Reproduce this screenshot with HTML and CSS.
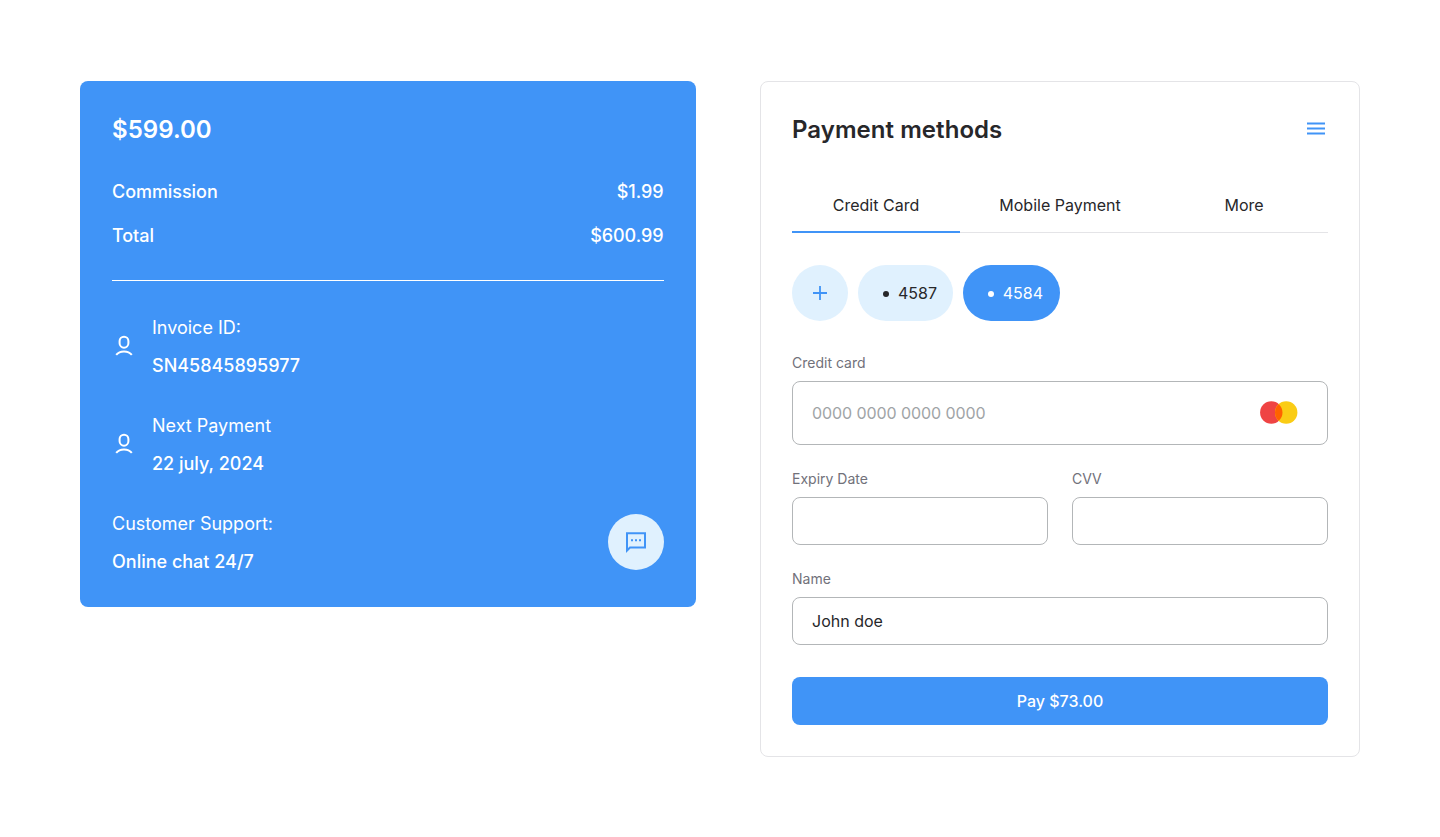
FILE: index.html
```html
<!DOCTYPE html>
<html lang="en">
<head>
<meta charset="utf-8">
<title>Payment</title>
<link rel="stylesheet" href="styles.css">
</head>
<body>
<main class="page">
  <section class="summary">
    <h1 class="title">$599.00</h1>
    <div class="rows">
      <div class="row"><span>Commission</span><span>$1.99</span></div>
      <div class="row"><span>Total</span><span>$600.99</span></div>
    </div>
    <div class="divider"></div>
    <div class="details">
      <div class="detail">
        <svg class="person" width="24" height="24" viewBox="0 0 24 24" fill="none" stroke="currentColor" stroke-width="2"><rect x="7.6" y="2.7" width="8.8" height="11" rx="4.4"/><path d="M4.200 20.900C6 18.600 9 17.500 12 17.500s6 1.100 7.800 3.400"/></svg>
        <div class="pair"><span class="caption">Invoice ID:</span><span class="value">SN45845895977</span></div>
      </div>
      <div class="detail">
        <svg class="person" width="24" height="24" viewBox="0 0 24 24" fill="none" stroke="currentColor" stroke-width="2"><rect x="7.6" y="2.7" width="8.8" height="11" rx="4.4"/><path d="M4.200 20.900C6 18.600 9 17.500 12 17.500s6 1.100 7.800 3.400"/></svg>
        <div class="pair"><span class="caption">Next Payment</span><span class="value">22 july, 2024</span></div>
      </div>
      <div class="detail support">
        <div class="pair"><span class="caption">Customer Support:</span><span class="value">Online chat 24/7</span></div>
        <button class="chat" aria-label="Open chat">
          <svg width="24" height="24" viewBox="0 0 24 24" fill="none" stroke="currentColor" stroke-width="2"><path d="M3 20.500V3.300h18v14.200H6z"/><path d="M7 10.300h2M11 10.300h2M15 10.300h2"/></svg>
        </button>
      </div>
    </div>
  </section>

  <section class="methods">
    <header class="methods-head">
      <h2 class="title">Payment methods</h2>
      <svg class="menu" width="24" height="24" viewBox="0 0 24 24" fill="none" stroke="currentColor" stroke-width="2"><path d="M3 6.600h18M3 11.600h18M3 16.600h18"/></svg>
    </header>
    <nav class="tabs">
      <span class="tab active">Credit Card</span>
      <span class="tab">Mobile Payment</span>
      <span class="tab">More</span>
    </nav>
    <div class="chips">
      <button class="chip add" aria-label="Add card"><svg width="24" height="24" viewBox="0 0 24 24" fill="none" stroke="currentColor" stroke-width="1.8"><path d="M12 5v14M5 12h14"/></svg></button>
      <button class="chip card-a"><i class="dot"></i>4587</button>
      <button class="chip card-b"><i class="dot"></i>4584</button>
    </div>
    <div class="form">
      <label class="field"><span class="label">Credit card</span>
        <span class="box tall"><input class="input number" placeholder="0000 0000 0000 0000">
          <svg class="brand" width="38" height="24" viewBox="0 0 38 24"><circle cx="11.300" cy="11.500" r="11.200" fill="#ef4444"/><circle cx="26.200" cy="11.500" r="11.200" fill="#facc15"/><path d="M18.750 3.140a11.200 11.200 0 0 1 0 16.720a11.200 11.200 0 0 1 0-16.720z" fill="#ff6200"/></svg>
        </span>
      </label>
      <div class="split">
        <label class="field"><span class="label">Expiry Date</span><span class="box"><input class="input"></span></label>
        <label class="field"><span class="label">CVV</span><span class="box"><input class="input"></span></label>
      </div>
      <label class="field"><span class="label">Name</span><span class="box"><input class="input" value="John doe"></span></label>
    </div>
    <button class="pay">Pay $73.00</button>
  </section>
</main>
</body>
</html>
```
FILE: styles.css
```css
* { box-sizing: border-box; }
body { margin: 0; background: #fff; color: #27272a; font-family: Inter, "Liberation Sans", sans-serif; }
button, input { font: inherit; color: inherit; border: 0; padding: 0; background: none; letter-spacing: inherit; }
.page { display: flex; align-items: flex-start; gap: 64px; width: 1440px; padding: 80.5px 80px; }
.title { margin: 0 0 -2px; font-size: 24px; line-height: 34px; font-weight: 600; letter-spacing: 0.05px; }

.summary { width: 616px; height: 526px; padding: 32px; border-radius: 8px; background: #4094f7; color: #fff; font-size: 18px; line-height: 28px; }
.rows { display: flex; flex-direction: column; gap: 16px; margin: 33px 0 -1px; font-weight: 500; }
.row { display: flex; justify-content: space-between; padding-right: 0.5px; letter-spacing: -0.05px; }
.divider { height: 1px; margin: 31px 0 32px; background: #fff; }
.details { display: flex; flex-direction: column; gap: 32px; }
.detail { display: flex; align-items: center; gap: 16px; }
.support { justify-content: space-between; }
.pair { display: flex; flex-direction: column; gap: 10px; padding-top: 1px; margin-bottom: -1px; }
.value { font-weight: 500; }
.chat { display: grid; place-items: center; width: 56px; height: 56px; border-radius: 50%; background: #e0f1fe; color: #4094f7; }

.methods { width: 600px; height: 676px; padding: 31px; border: 1px solid #e4e4e7; border-radius: 8px; font-size: 16px; line-height: 24px; }
.methods-head { display: flex; justify-content: space-between; align-items: center; height: 32px; }
.menu { color: #4094f7; }
.tabs { display: grid; grid-template-columns: repeat(3, 168px); gap: 16px; height: 56px; margin-top: 32px; box-shadow: inset 0 -1px #e4e4e7; }
.tab { padding-top: 16px; text-align: center; }
.tab.active { border-bottom: 2px solid #4094f7; }
.chips { display: flex; gap: 10px; margin-top: 32px; }
.chip { display: flex; align-items: center; justify-content: flex-end; gap: 9px; height: 56px; padding-right: 16px; border-radius: 28px; background: #e0f1fe; }
.add { width: 56px; color: #4094f7; }
.card-a { width: 95px; }
.card-b { width: 97px; padding-right: 17px; background: #4094f7; color: #fff; }
.dot { width: 6px; height: 6px; margin-top: 2px; border-radius: 50%; background: currentColor; }
.form { display: flex; flex-direction: column; gap: 24px; margin-top: 32px; }
.split { display: grid; grid-template-columns: repeat(2, minmax(0, 1fr)); gap: 24px; }
.field { display: flex; flex-direction: column; gap: 8px; }
.label { font-size: 14px; line-height: 20px; color: #71717a; }
.box { display: flex; align-items: center; height: 48px; padding: 0 19px; border: 1px solid #b3b6b8; border-radius: 8px; }
.box.tall { height: 64px; padding-right: 29px; }
.input { flex: 1; min-width: 0; height: 24px; outline: 0; }
.number { letter-spacing: -0.08px; }
.input::placeholder { color: #a0a4a6; opacity: 1; }
.pay { display: block; width: 100%; height: 48px; margin-top: 32px; border-radius: 8px; background: #4094f7; color: #fff; font-weight: 500; }
```
